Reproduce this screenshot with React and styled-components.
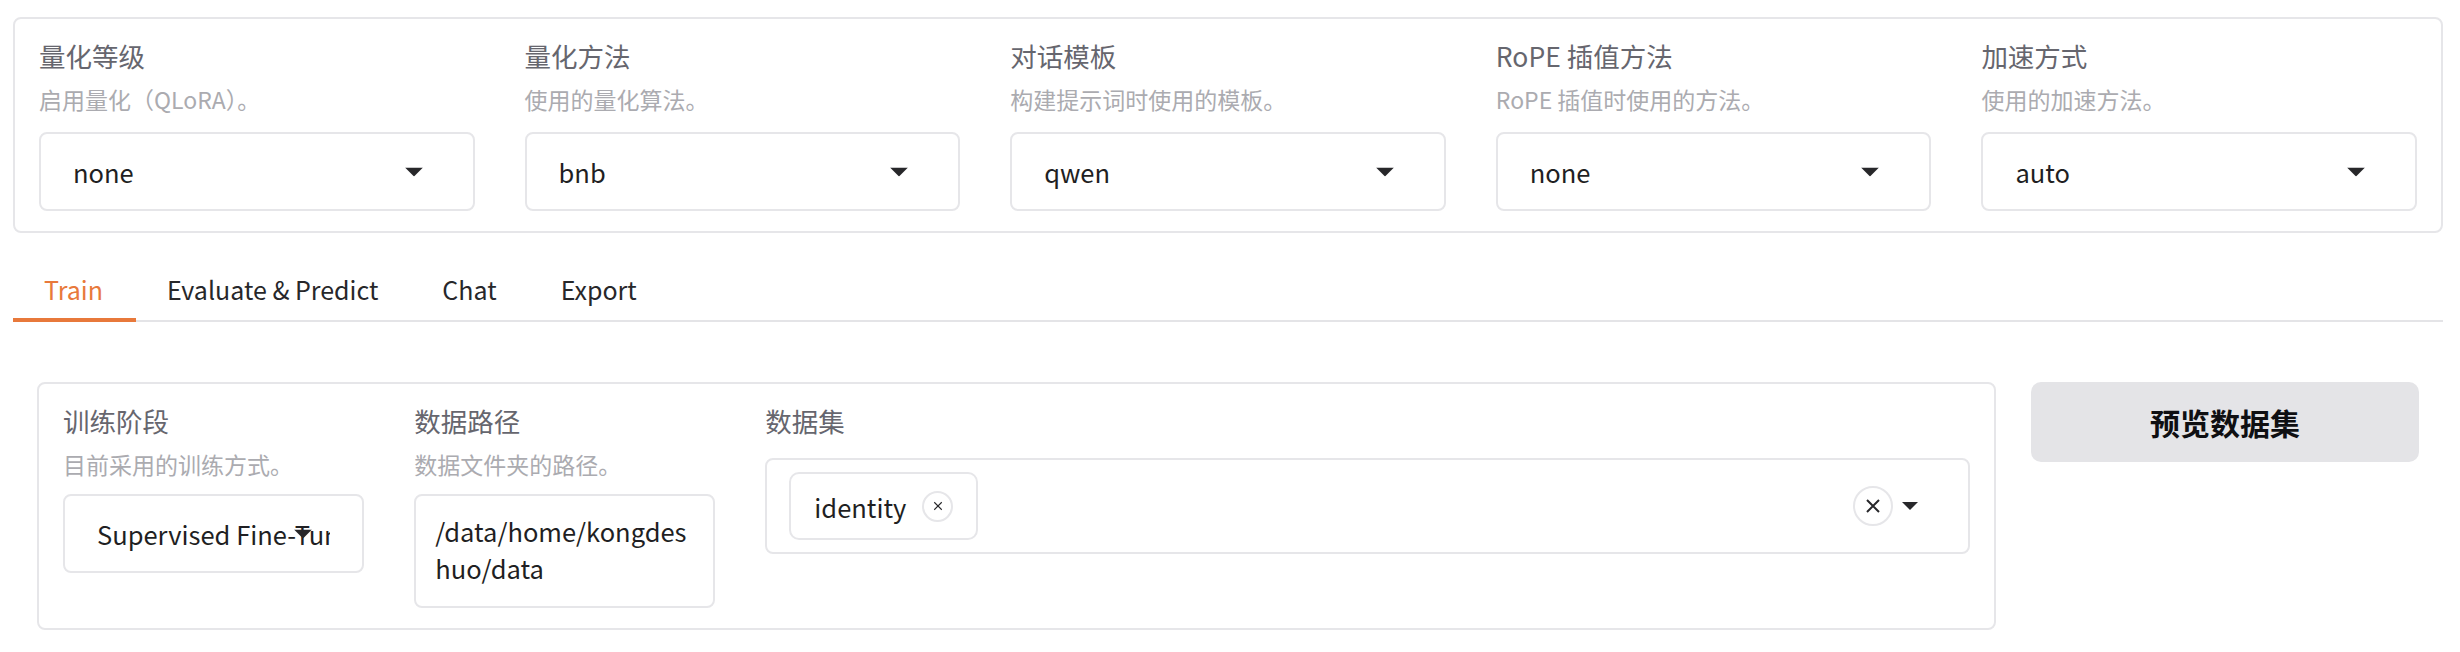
import React from "react";
import styled, { createGlobalStyle } from "styled-components";

const GlobalStyle = createGlobalStyle`
  body {
    margin: 0;
    background: #ffffff;
    font-family: "Noto Sans CJK SC", "Noto Sans", sans-serif;
  }
`;

const Page = styled.div`
  padding: 17px 17px 0 13px;
`;

const Panel = styled.div`
  display: flex;
  gap: 50px;
  border: 2px solid #e6e6e9;
  border-radius: 8px;
  padding: ${(p) => (p.$compact ? "20px 24px 20px 24px" : "20px 24px 20px 24px")};
  background: #fff;
`;

const Field = styled.div`
  flex: ${(p) => p.$grow || 1};
  min-width: 0;
  display: flex;
  flex-direction: column;
`;

const Label = styled.div`
  font-size: 26.5px;
  line-height: 34px;
  color: #66666e;
`;

const Info = styled.div`
  margin-top: 12px;
  font-size: 23px;
  line-height: 28px;
  color: #ababb0;
  white-space: nowrap;
`;

const SelectBox = styled.div`
  position: relative;
  margin-top: ${(p) => (p.$tight ? 16 : 19)}px;
  height: 79px;
  border: 2px solid #e6e6e9;
  border-radius: 8px;
  display: flex;
  align-items: center;
  padding-left: 32px;
  box-sizing: border-box;
`;

const Value = styled.div`
  flex: 1 1 0;
  width: 0;
  margin-right: 32px;
  overflow: hidden;
  white-space: nowrap;
  text-overflow: clip;
  font-size: 25.5px;
  color: #1f1f23;
`;

const Caret = styled.svg`
  position: absolute;
  right: 50px;
  top: 50%;
  transform: translateY(-50%);
`;

const TextArea = styled.div`
  margin-top: 16px;
  height: 114px;
  box-sizing: border-box;
  border: 2px solid #e6e6e9;
  border-radius: 8px;
  padding: 16px 18px 0 19px;
  font-size: 25.5px;
  line-height: 37px;
  color: #1f1f23;
`;

const MultiBox = styled.div`
  margin-top: 20px;
  height: 96px;
  box-sizing: border-box;
  border: 2px solid #e6e6e9;
  border-radius: 8px;
  display: flex;
  align-items: center;
  padding: 0 50px 0 22px;
`;

const Chip = styled.div`
  display: flex;
  align-items: center;
  gap: 16px;
  height: 68px;
  box-sizing: border-box;
  padding: 0 23px;
  border: 2px solid #e6e6e9;
  border-radius: 10px;
  font-size: 25.5px;
  color: #1f1f23;
`;

const CircleBtn = styled.div`
  width: ${(p) => p.$size}px;
  height: ${(p) => p.$size}px;
  box-sizing: border-box;
  border: 2px solid #e6e6e9;
  border-radius: 50%;
  display: flex;
  align-items: center;
  justify-content: center;
`;

const Spacer = styled.div`
  flex: 1;
`;

const TabBar = styled.div`
  margin-top: 27px;
  display: flex;
  border-bottom: 2px solid #e4e4e7;
`;

const Tab = styled.div`
  padding: 9px 33px 9px 31px;
  margin-bottom: -2px;
  font-size: 25px;
  line-height: 40px;
  color: ${(p) => (p.$active ? "#e8793b" : "#27272a")};
  border-bottom: 4px solid ${(p) => (p.$active ? "#e8793b" : "transparent")};
`;

const TabBody = styled.div`
  display: flex;
  align-items: flex-start;
  gap: 35px;
  padding: 60px 24px 0 24px;
`;

const Grow = styled.div`
  flex: 1;
  min-width: 0;
`;

const PreviewButton = styled.button`
  width: 388px;
  height: 80px;
  border: none;
  border-radius: 10px;
  background: #e4e4e7;
  font-family: inherit;
  font-size: 30px;
  font-weight: 700;
  color: #0f0f12;
`;

const Arrow = () => (
  <Caret width="18" height="9" viewBox="0 0 18 9">
    <path d="M0 0 H18 L9 9 Z" fill="#27272a" />
  </Caret>
);

const XIcon = ({ size, stroke }) => (
  <svg width={size} height={size} viewBox="0 0 16 16">
    <path d="M2 2 L14 14 M14 2 L2 14" stroke="#27272a" strokeWidth={stroke} fill="none" />
  </svg>
);

const topFields = [
  { label: "量化等级", info: "启用量化（QLoRA）。", value: "none" },
  { label: "量化方法", info: "使用的量化算法。", value: "bnb" },
  { label: "对话模板", info: "构建提示词时使用的模板。", value: "qwen" },
  { label: "RoPE 插值方法", info: "RoPE 插值时使用的方法。", value: "none" },
  { label: "加速方式", info: "使用的加速方法。", value: "auto" },
];

const tabs = ["Train", "Evaluate & Predict", "Chat", "Export"];

export default function App() {
  return (
    <Page>
      <GlobalStyle />
      <Panel>
        {topFields.map((f, i) => (
          <Field key={i}>
            <Label>{f.label}</Label>
            <Info>{f.info}</Info>
            <SelectBox>
              <Value>{f.value}</Value>
              <Arrow />
            </SelectBox>
          </Field>
        ))}
      </Panel>

      <TabBar>
        {tabs.map((t, i) => (
          <Tab key={t} $active={i === 0}>
            {t}
          </Tab>
        ))}
      </TabBar>

      <TabBody>
        <Grow>
          <Panel $compact>
            <Field>
              <Label>训练阶段</Label>
              <Info>目前采用的训练方式。</Info>
              <SelectBox $tight>
                <Value>Supervised Fine-Tuning</Value>
                <Arrow />
              </SelectBox>
            </Field>
            <Field>
              <Label>数据路径</Label>
              <Info>数据文件夹的路径。</Info>
              <TextArea>
                /data/home/kongdes
                <br />
                huo/data
              </TextArea>
            </Field>
            <Field $grow={4}>
              <Label>数据集</Label>
              <MultiBox>
                <Chip>
                  identity
                  <CircleBtn $size={31}>
                    <XIcon size={10} stroke={1.8} />
                  </CircleBtn>
                </Chip>
                <Spacer />
                <CircleBtn $size={40}>
                  <XIcon size={16} stroke={2} />
                </CircleBtn>
                <svg width="16" height="8" viewBox="0 0 18 9" style={{ marginLeft: 9 }}>
                  <path d="M0 0 H18 L9 9 Z" fill="#27272a" />
                </svg>
              </MultiBox>
            </Field>
          </Panel>
        </Grow>
        <PreviewButton>预览数据集</PreviewButton>
      </TabBody>
    </Page>
  );
}
